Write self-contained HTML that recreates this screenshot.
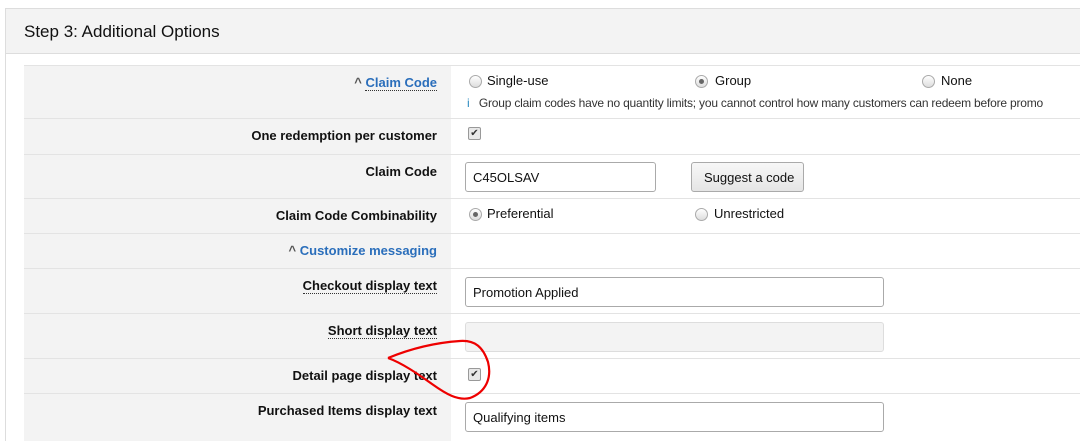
<!DOCTYPE html>
<html><head><meta charset="utf-8"><style>
html,body{margin:0;width:1080px;height:441px;overflow:hidden}
body{background:#fff;font-family:"Liberation Sans",sans-serif;font-size:13px;color:#111;position:relative}
.card{position:absolute;left:5px;top:8px;width:1090px;height:450px;border:1px solid #ddd;background:#fff}
.hdr{position:absolute;left:0;top:0;right:0;height:44px;background:#f3f3f3;border-bottom:1px solid #ddd}
.hdr span{position:absolute;left:18px;top:13px;font-size:17px;color:#111}
.row{position:absolute;left:24px;width:1060px;border-top:1px solid #e3e3e3}
.lab{position:absolute;left:0;top:0;bottom:0;width:427px;background:#f3f3f3}
.lab b{position:absolute;right:14px;top:9px;font-weight:bold;font-size:13px;white-space:nowrap}
.dot{border-bottom:1px dotted #333}
.link{color:#2a6ebb}
.radio{position:absolute;width:11px;height:11px;border:1px solid #aaa;border-radius:50%;background:linear-gradient(#fff,#ddd)}
.radio.on::after{content:"";position:absolute;left:3px;top:3px;width:5px;height:5px;border-radius:50%;background:#666}
.chk{position:absolute;width:11px;height:11px;border:1px solid #999;border-radius:2px;background:#e8e8e8;font-size:10px;line-height:11px;text-align:center;color:#333}
.t{position:absolute;white-space:nowrap}
.inp{position:absolute;height:28px;border:1px solid #aaa;border-radius:3px;background:#fff;box-sizing:border-box;padding:7px 7px;font-size:13px}
</style></head><body>
<div class="card"><div class="hdr"><span>Step 3: Additional Options</span></div></div>
<div class="row" style="top:65px;height:53px"><div class="lab"><b><span style="color:#555">^ </span><span class="link dot">Claim Code</span></b></div>
<div class="radio" style="left:445px;top:9px"></div><span class="t" style="left:463px;top:7px">Single-use</span>
<div class="radio on" style="left:671px;top:9px"></div><span class="t" style="left:691px;top:7px">Group</span>
<div class="radio" style="left:898px;top:9px"></div><span class="t" style="left:917px;top:7px">None</span>
<span class="t" style="left:443px;top:30px;font-size:12px;color:#333;letter-spacing:-0.2px"><span style="color:#2a8ac0">i</span>&nbsp;&nbsp; Group claim codes have no quantity limits; you cannot control how many customers can redeem before promo</span></div>
<div class="row" style="top:118px;height:36px"><div class="lab"><b>One redemption per customer</b></div><div class="chk" style="left:444px;top:8px">✔</div></div>
<div class="row" style="top:154px;height:44px"><div class="lab"><b>Claim Code</b></div>
<div class="inp" style="left:441px;top:7px;width:191px;height:30px">C45OLSAV</div>
<div class="inp" style="left:667px;top:7px;width:113px;height:30px;background:linear-gradient(#f7f7f7,#e5e5e5);padding-left:12px">Suggest a code</div></div>
<div class="row" style="top:198px;height:35px"><div class="lab"><b>Claim Code Combinability</b></div>
<div class="radio on" style="left:445px;top:9px"></div><span class="t" style="left:463px;top:7px">Preferential</span>
<div class="radio" style="left:671px;top:9px"></div><span class="t" style="left:690px;top:7px">Unrestricted</span></div>
<div class="row" style="top:233px;height:35px"><div class="lab"><b><span style="color:#555">^ </span><span class="link">Customize messaging</span></b></div></div>
<div class="row" style="top:268px;height:45px"><div class="lab"><b class="dot">Checkout display text</b></div><div class="inp" style="left:441px;top:8px;width:419px;height:30px">Promotion Applied</div></div>
<div class="row" style="top:313px;height:45px"><div class="lab"><b class="dot">Short display text</b></div><div class="inp" style="left:441px;top:8px;width:419px;height:30px;background:#f3f3f3;border-color:#ddd"></div></div>
<div class="row" style="top:358px;height:35px"><div class="lab"><b>Detail page display text</b></div><div class="chk" style="left:444px;top:9px">✔</div></div>
<div class="row" style="top:393px;height:50px"><div class="lab"><b>Purchased Items display text</b></div><div class="inp" style="left:441px;top:8px;width:419px;height:30px">Qualifying items</div></div>
<svg style="position:absolute;left:0;top:0" width="1080" height="441"><path d="M388 358 C405 351 430 343 460 341 C475 340 483 347 488 362 C492 378 486 392 470 398 C458 401 446 394 432 384 C418 374 402 363 388 358" fill="none" stroke="#e00" stroke-width="2.2"/></svg>
</body></html>
